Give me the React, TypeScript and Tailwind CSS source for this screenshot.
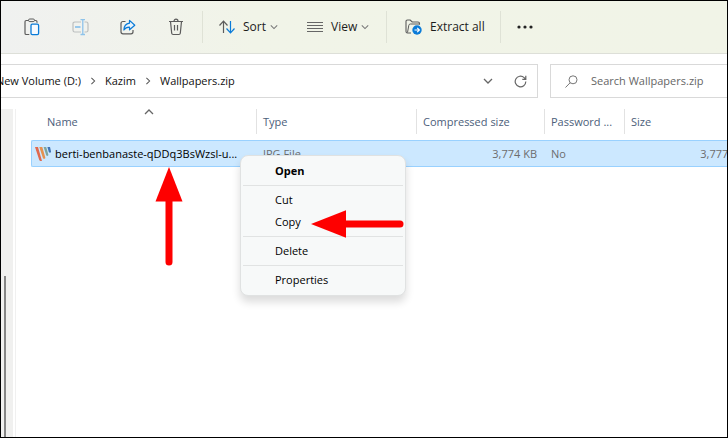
import type { ReactNode } from 'react'
import clsx from 'clsx'

interface FileRow {
  name: string
  type: string
  compressed: string
  password: string
  size: string
}

const ROWS: FileRow[] = [
  {
    name: 'berti-benbanaste-qDDq3BsWzsl-u...',
    type: 'JPG File',
    compressed: '3,774 KB',
    password: 'No',
    size: '3,777 KB',
  },
]

const CRUMBS = ['Kazim', 'Wallpapers.zip']

const MENU_GROUPS = [['Open'], ['Cut', 'Copy'], ['Delete'], ['Properties']]

const Chevron = ({ className }: { className?: string }) => (
  <svg viewBox="0 0 10 10" fill="none" stroke="currentColor" strokeWidth="1.300" className={className}>
    <path d="M1 3l4 4 4-4" />
  </svg>
)

const PasteIcon = () => (
  <svg width="16" height="18" viewBox="0 0 16 18" fill="none">
    <path
      d="M4.5 2.5H2.3C1.5 2.5 1 3 1 3.8v11.4c0 .8.5 1.3 1.3 1.3h3M10.500 2.500h1.200c.8 0 1.300.5 1.300 1.300v1"
      stroke="#5c5c5c"
      strokeWidth="1.200"
    />
    <rect x="4.500" y="1" width="6" height="2.600" rx="1.300" stroke="#5c5c5c" />
    <rect x="7" y="6.200" width="7.600" height="10.400" rx="1.300" fill="#f6faff" stroke="#0a7bd8" strokeWidth="1.300" />
  </svg>
)

const RenameIcon = () => (
  <svg width="17" height="17" viewBox="0 0 17 17" fill="none">
    <path
      d="M9 3H2.800C1.600 3 1 3.700 1 4.800v6.400c0 1.100.6 1.800 1.800 1.800H9M12.500 3h1.700c1.200 0 1.800.7 1.800 1.800v6.400c0 1.100-.6 1.800-1.800 1.800h-1.700"
      stroke="#bcbfbf"
      strokeWidth="1.200"
    />
    <path d="M3 8h5.500" stroke="#8ec3ea" strokeWidth="1.800" />
    <path d="M8.500.7h4.500M8.500 15.500h4.500M10.800.7v14.800" stroke="#8ec3ea" strokeWidth="1.300" />
  </svg>
)

const ShareIcon = () => (
  <svg width="16" height="16" viewBox="0 0 16 16" fill="none">
    <path
      d="M5.500 2.500H3C1.800 2.500 1 3.300 1 4.500v8.300c0 1.200.8 2 2 2h8c1.200 0 2-.8 2-2V11"
      stroke="#5c5c5c"
      strokeWidth="1.200"
    />
    <path
      d="M9.500 1.400l5.300 4.800-5.300 4.600V8.100C7 8 5.200 8.900 3.900 11c.1-3.700 2-6.300 5.600-6.800z"
      fill="#e9f4fc"
      stroke="#0a7bd8"
      strokeWidth="1.200"
      strokeLinejoin="round"
    />
  </svg>
)

const TrashIcon = () => (
  <svg width="16" height="18" viewBox="0 0 16 18" fill="none" stroke="#5c5c5c" strokeWidth="1.200">
    <path d="M1 3.500h14M6 3.300c0-2.800 4-2.800 4 0M2.500 3.500l1.200 11.700c.1.800.6 1.300 1.400 1.300h5.800c.8 0 1.300-.5 1.400-1.300l1.200-11.700M6.500 7v5.500M9.500 7v5.500" />
  </svg>
)

const SortIcon = () => (
  <svg width="16" height="14" viewBox="0 0 16 14" fill="none" strokeWidth="1.200" className="mr-2 shrink-0">
    <path d="M4.500 13V1.500M.5 5.500l4-4.300 4 4.300" stroke="#5c5c5c" />
    <path d="M11.500 1v11.500M7.500 8.500l4 4.300 4-4.300" stroke="#0a7bd8" />
  </svg>
)

const ViewIcon = () => (
  <svg
    width="16"
    height="12"
    viewBox="0 0 16 12"
    stroke="#666"
    shapeRendering="crispEdges"
    className="mr-2 shrink-0"
  >
    <path d="M0 1.500h16M0 4.500h16M0 7.500h16M0 10.500h16" />
  </svg>
)

const ExtractIcon = () => (
  <svg width="17" height="16" viewBox="0 0 17 16" fill="none" className="mr-2 shrink-0">
    <path
      d="M6 14H2.500C1.500 14 1 13.400 1 12.500v-10C1 1.600 1.500 1 2.500 1h2.700l2 2H13c1 0 1.500.6 1.500 1.500v1"
      stroke="#5c5c5c"
      strokeWidth="1.100"
    />
    <path d="M2.500 13.500l1.300-7.200c.2-.9.700-1.300 1.600-1.300H15" stroke="#5c5c5c" />
    <circle cx="12" cy="11" r="4.700" fill="#0a7bd8" />
    <path d="M9.500 11h4.700M12.200 8.800l2.200 2.200-2.200 2.200" stroke="#fff" strokeWidth="1.200" />
  </svg>
)

const RefreshIcon = () => (
  <svg width="13" height="13" viewBox="0 0 13 13" fill="none" stroke="#666" strokeWidth="1.200">
    <path d="M11.800 6.500a5.300 5.300 0 1 1-1.700-3.900l1.400 1.400M11.800.8v3.500H8.300" />
  </svg>
)

const SearchIcon = () => (
  <svg width="13" height="13" viewBox="0 0 13 13" fill="none" stroke="#777" className="shrink-0">
    <circle cx="8" cy="4.800" r="4" />
    <path d="M5.200 7.700L.5 12.500" />
  </svg>
)

const JpgIcon = () => (
  <svg width="16" height="16" viewBox="0 0 16 16" className="shrink-0">
    <path d="M0 1h3l4 14c-1.500.3-2.500-.2-2.900-1.500z" fill="#e0694f" />
    <path d="M4.300 1h3l3 10.500c.4 1.500-1.900 1.900-2.400.5z" fill="#e5914f" />
    <path d="M8.600 1h2.600l2.100 7.500c.4 1.600-1.700 1.900-2.200.5z" fill="#7fa59c" />
    <path d="M12.400 1H15l1 4.500c.3 1.500-1.800 1.800-2.200.5z" fill="#3f74b5" />
  </svg>
)

const Divider = () => <div className="h-8 w-px shrink-0 bg-[#dfe2d6]" />

const IconButton = ({ label, children }: { label: string; children: ReactNode }) => (
  <button type="button" aria-label={label} className="flex h-8 w-12 shrink-0 items-center justify-center">
    {children}
  </button>
)

const Toolbar = () => (
  <div className="flex h-[53px] items-center border-b border-[#dddfd8] bg-linear-to-r from-[#f0f1f0] via-[#f1f4e8] via-35% to-[#f1f4e7] pl-[7px] text-[12px] text-[#1c1c1c]">
    <IconButton label="Paste"><PasteIcon /></IconButton>
    <IconButton label="Rename"><RenameIcon /></IconButton>
    <IconButton label="Share"><ShareIcon /></IconButton>
    <IconButton label="Delete"><TrashIcon /></IconButton>
    <div className="w-[2px] shrink-0" />
    <Divider />
    <button type="button" className="flex h-8 w-[88px] shrink-0 items-center pl-4">
      <SortIcon />
      <span>Sort</span>
      <Chevron className="ml-1 size-2 shrink-0 text-[#777]" />
    </button>
    <button type="button" className="flex h-8 w-[95px] shrink-0 items-center pl-4">
      <ViewIcon />
      <span>View</span>
      <Chevron className="ml-1 size-2 shrink-0 text-[#777]" />
    </button>
    <Divider />
    <button type="button" className="flex h-8 w-[113px] shrink-0 items-center whitespace-nowrap pl-[18px]">
      <ExtractIcon />
      <span>Extract all</span>
    </button>
    <Divider />
    <IconButton label="See more">
      <svg width="16" height="4" viewBox="0 0 16 4" fill="#222">
        <circle cx="2" cy="2" r="1.600" />
        <circle cx="8" cy="2" r="1.600" />
        <circle cx="14" cy="2" r="1.600" />
      </svg>
    </IconButton>
  </div>
)

const AddressRow = () => (
  <div className="flex gap-3 py-[10px]">
    <nav
      aria-label="Address"
      className="flex h-[34px] min-w-0 flex-1 items-center border-y border-r border-[#d9d9d9] text-[#111]"
    >
      {/* the path is scrolled, so the drive name is cut off on its left */}
      <div className="flex w-20 shrink-0 justify-end overflow-hidden whitespace-nowrap">
        <a href="#drive">New Volume (D:)</a>
      </div>
      {CRUMBS.map((crumb) => (
        <div key={crumb} className="flex items-center">
          <Chevron className="mx-2 size-2 -rotate-90 text-[#555]" />
          <a href="#folder">{crumb}</a>
        </div>
      ))}
      <button type="button" aria-label="Previous locations" className="ml-auto flex w-8 justify-center">
        <Chevron className="size-[10px] text-[#666]" />
      </button>
      <button type="button" aria-label="Refresh" className="mr-[1px] flex w-8 justify-center">
        <RefreshIcon />
      </button>
    </nav>
    <label className="flex h-[34px] w-[177px] items-center gap-[13px] border-y border-l border-[#d9d9d9] pl-[14px]">
      <SearchIcon />
      <input
        type="search"
        aria-label="Search"
        placeholder="Search Wallpapers.zip"
        className="w-full min-w-0 outline-none placeholder:text-[#666]"
      />
    </label>
  </div>
)

const HEAD_CELL = 'flex h-[25px] items-center border-r border-[#e2e2e2]'
const BODY_CELL = 'h-[27px] border-y border-[#99d1ff] bg-[#cce8ff] p-0'

const FileTable = () => (
  <table className="w-[722px] table-fixed border-separate border-spacing-0 whitespace-nowrap">
    <colgroup>
      <col className="w-[226px]" />
      <col className="w-[160px]" />
      <col className="w-[128px]" />
      <col className="w-[80px]" />
      <col className="w-[128px]" />
    </colgroup>
    <thead className="text-left text-[#4c607a]">
      <tr>
        <th className="p-0 pb-[6px] font-normal">
          <div className={clsx(HEAD_CELL, 'relative pl-4')}>
            Name
            <Chevron className="absolute -top-0.5 left-[113px] size-[10px] rotate-180 text-[#666]" />
          </div>
        </th>
        {['Type', 'Compressed size', 'Password ...', 'Size'].map((title) => (
          <th key={title} className="p-0 pb-[6px] font-normal">
            <div className={clsx(HEAD_CELL, 'pl-[6px]')}>{title}</div>
          </th>
        ))}
      </tr>
    </thead>
    <tbody className="text-[#6d6d6d]">
      {ROWS.map((row) => (
        <tr key={row.name}>
          <td className={clsx(BODY_CELL, 'rounded-l-xs border-l text-black')}>
            <div className="flex items-center gap-1 pl-[3px]">
              <JpgIcon />
              {row.name}
            </div>
          </td>
          <td className={BODY_CELL}><div className="pl-[6px]">{row.type}</div></td>
          <td className={BODY_CELL}><div className="pr-2 text-right">{row.compressed}</div></td>
          <td className={BODY_CELL}><div className="pl-[6px]">{row.password}</div></td>
          <td className={BODY_CELL}><div className="pr-2 text-right">{row.size}</div></td>
        </tr>
      ))}
    </tbody>
  </table>
)

const ContextMenu = () => (
  <div
    role="menu"
    className="absolute left-[239px] top-[154px] w-[166px] rounded-lg border border-[#e0e2e2] bg-[#f7f9f9] py-1 text-black shadow-[0_6px_8px_rgba(0,0,0,0.14)]"
  >
    {MENU_GROUPS.map((group, i) => (
      <div key={group[0]}>
        {i > 0 && <div className="mx-[2px] my-[3px] h-px bg-[#e1e3e3]" />}
        {group.map((item) => (
          <button
            key={item}
            type="button"
            role="menuitem"
            className={clsx('flex h-[22px] w-full items-center pl-[34px]', item === 'Open' && 'font-bold')}
          >
            {item}
          </button>
        ))}
      </div>
    ))}
  </div>
)

// Red pointers laid over the window: one to the file, one to "Copy".
const Arrows = () => (
  <>
    <svg width="28" height="100" viewBox="0 0 28 100" className="pointer-events-none absolute left-[154px] top-[166px]">
      <path d="M14 0l13.500 34.500H.5z" fill="#fe0000" />
      <path d="M14 30v65" stroke="#fe0000" strokeWidth="7" strokeLinecap="round" />
    </svg>
    <svg width="94" height="28" viewBox="0 0 94 28" className="pointer-events-none absolute left-[309px] top-[209px]">
      <path d="M1 14L36 .3v27.400z" fill="#fe0000" />
      <path d="M32 14h58" stroke="#fe0000" strokeWidth="7" strokeLinecap="round" />
    </svg>
  </>
)

export default function App() {
  return (
    <div className="relative flex min-h-screen flex-col overflow-hidden border border-black bg-white font-['Open_Sans','Noto_Sans',sans-serif] text-[11px] leading-4">
      <Toolbar />
      <AddressRow />
      <main className="mt-[1px] flex flex-1">
        <aside className="flex w-3 shrink-0 flex-col bg-[#f0f0ef] pl-[3px] pt-[167px]">
          <div className="w-[2px] flex-1 bg-[#858585]" />
        </aside>
        <div className="ml-[2px] min-w-0 flex-1 overflow-hidden border-l border-[#f0f0f0] pl-[15px]">
          <FileTable />
        </div>
      </main>
      <ContextMenu />
      <Arrows />
    </div>
  )
}
